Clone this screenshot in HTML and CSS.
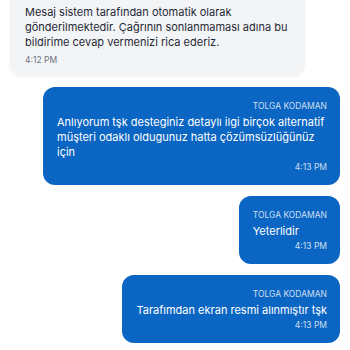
FILE: index.html
```html
<!DOCTYPE html>
<html lang="tr">
<head>
    <meta charset="UTF-8">
    <meta name="viewport" content="width=device-width, initial-scale=1.0">
    <title>Destek Sohbeti</title>
    <link rel="stylesheet" href="styles.css">
</head>
<body>
    <div class="chat">
        <div class="bubble incoming">
            <div class="sender">4:12 PM</div>
            <p class="text">Mesaj sistem tarafından otomatik olarak gönderilmektedir. Çağrının sonlanmaması adına bu bildirime cevap vermenizi rica ederiz.</p>
            <div class="time">4:12 PM</div>
        </div>

        <div class="bubble outgoing">
            <div class="sender">TOLGA KODAMAN</div>
            <p class="text">Anlıyorum tşk desteginiz detaylı ilgi birçok alternatif müşteri odaklı oldugunuz hatta çözümsüzlüğünüz için</p>
            <div class="time">4:13 PM</div>
        </div>

        <div class="bubble outgoing">
            <div class="sender">TOLGA KODAMAN</div>
            <p class="text">Yeterlidir</p>
            <div class="time">4:13 PM</div>
        </div>

        <div class="bubble outgoing">
            <div class="sender">TOLGA KODAMAN</div>
            <p class="text">Tarafımdan ekran resmi alınmıştır tşk</p>
            <div class="time">4:13 PM</div>
        </div>
    </div>
</body>
</html>
```

FILE: styles.css
```css
* {
    margin: 0;
    padding: 0;
    box-sizing: border-box;
    font-family: Inter, 'Noto Sans', sans-serif;
}

body {
    background: #ffffff;
    overflow: hidden;
}

.chat {
    display: flex;
    flex-direction: column;
    gap: 11px;
    padding: 0 10px;
    margin-top: -19px;
}

.bubble {
    max-width: 297px;
    border-radius: 12px;
}

.sender,
.time {
    font-size: 8.5px;
    line-height: 12px;
}

.text {
    font-size: 11px;
    line-height: 15px;
}

/* message from the support system */
.incoming {
    align-self: flex-start;
    width: 295px;
    background: #f3f4f6;
    color: #1f2937;
    padding: 10px 15px 10px 15px;
    box-shadow: 0 1px 3px rgba(0,0,0,0.06);
}

.incoming .sender {
    color: #6b7280;
    margin-bottom: 2px;
}

.incoming .time {
    color: #6b7280;
    margin-top: 4px;
}

/* messages sent by the user */
.outgoing {
    align-self: flex-end;
    background: #0b65c2;
    color: #ffffff;
    padding: 13px 13px 12px 14px;
}

.outgoing .sender {
    text-align: right;
    color: rgba(255,255,255,0.8);
    margin-bottom: 3px;
}

.outgoing .time {
    text-align: right;
    color: rgba(255,255,255,0.8);
    margin-top: 1px;
}
```
